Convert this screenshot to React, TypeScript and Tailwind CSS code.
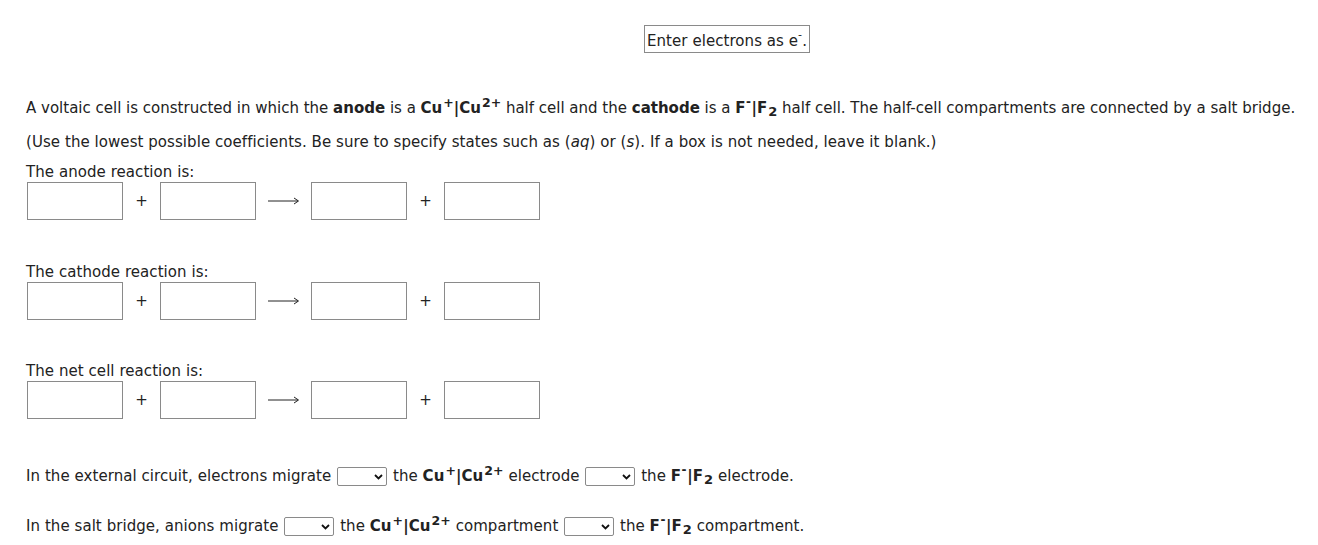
import React from "react";

const font = { fontFamily: '"DejaVu Sans", Verdana, sans-serif' };

function Box() {
  return <div className="w-[96px] h-[38px] border border-[#8a8a8a] bg-white shrink-0" />;
}

function Plus() {
  return <div className="w-[37px] text-center text-[15px] text-[#222] shrink-0">+</div>;
}

function Arrow() {
  return (
    <div className="w-[55px] flex justify-center shrink-0">
      <svg width="32" height="10" viewBox="0 0 32 10">
        <line x1="0" y1="5" x2="30" y2="5" stroke="#222" strokeWidth="1" />
        <path d="M26 2 L30.5 5 L26 8" fill="none" stroke="#222" strokeWidth="1" />
      </svg>
    </div>
  );
}

function Reaction() {
  return (
    <div className="flex items-center ml-[27px]">
      <Box />
      <Plus />
      <Box />
      <Arrow />
      <Box />
      <Plus />
      <Box />
    </div>
  );
}

function Sel() {
  return (
    <span className="inline-flex items-center justify-end w-[50px] h-[19px] border border-[#8a8a8a] rounded-[2px] bg-white mx-[1px] align-middle pr-[3px]">
      <svg width="9" height="6" viewBox="0 0 9 6">
        <path d="M1 1 L4.5 4.5 L8 1" fill="none" stroke="#111" strokeWidth="1.8" />
      </svg>
    </span>
  );
}

function Minus() {
  return <span className="relative top-[-7px] text-[12px] font-bold leading-none px-[0.5px]">-</span>;
}

function Cu() {
  return (
    <b>
      Cu<sup className="text-[12.5px] ml-[1px]">+</sup>|Cu<sup className="text-[12.5px] ml-[1px]">2+</sup>
    </b>
  );
}

function F() {
  return (
    <b>
      F<Minus />|F<sub className="text-[13px] ml-[1px]">2</sub>
    </b>
  );
}

export default function App() {
  return (
    <div className="w-[1318px] h-[545px] bg-white text-[#222] text-[15px] leading-[20px] tracking-[0.06px] relative" style={font}>
      <div className="pt-[25px] flex">
        <div className="ml-[644px] border border-[#8a8a8a] px-[2px] pt-[4px] h-[28px] flex items-center">
          Enter electrons as e<span className="relative top-[-7px] text-[11px] leading-none">-</span>.
        </div>
      </div>
      <div className="ml-[26px] mt-[45px] whitespace-nowrap tracking-[0px]">
        A voltaic cell is constructed in which the <b>anode</b> is a <Cu /> half cell and the <b>cathode</b> is a <F /> half cell. The half-cell compartments are connected by a salt bridge.
      </div>
      <div className="ml-[26px] mt-[14px] whitespace-nowrap">
        (Use the lowest possible coefficients. Be sure to specify states such as (<i>aq</i>) or (<i>s</i>). If a box is not needed, leave it blank.)
      </div>
      <div className="ml-[26px] mt-[10px]">The anode reaction is:</div>
      <Reaction />
      <div className="ml-[26px] mt-[42px]">The cathode reaction is:</div>
      <Reaction />
      <div className="ml-[26px] mt-[41px]">The net cell reaction is:</div>
      <Reaction />
      <div className="ml-[26px] mt-[47px] whitespace-nowrap">
        In the external circuit, electrons migrate{" "}
        <Sel />{" "}
        the <Cu /> electrode{" "}
        <Sel />{" "}
        the <F /> electrode.
      </div>
      <div className="ml-[26px] mt-[30px] whitespace-nowrap">
        In the salt bridge, anions migrate{" "}
        <Sel />{" "}
        the <Cu /> compartment{" "}
        <Sel />{" "}
        the <F /> compartment.
      </div>
    </div>
  );
}
